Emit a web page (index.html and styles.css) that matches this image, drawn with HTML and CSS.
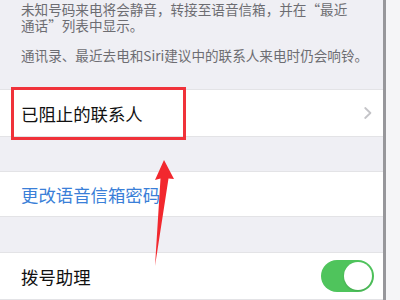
FILE: index.html
```html
<!DOCTYPE html>
<html lang="zh-CN">
<head>
<meta charset="utf-8">
<title>电话设置</title>
<link rel="stylesheet" href="styles.css">
</head>
<body>
<div class="screen">
  <main class="main">
    <div class="note">
      <p>未知号码来电将会静音，转接至语音信箱，并在“最近<br>通话”列表中显示。</p>
      <p>通讯录、最近去电和Siri建议中的联系人来电时仍会响铃。</p>
    </div>
    <div class="row row-first">
      <span class="label">已阻止的联系人</span>
      <svg class="chev" width="8" height="12" viewBox="0 0 8 12"><path d="M1.2 1 L6.4 6 L1.2 11" fill="none" stroke="#c4c4c8" stroke-width="1.8" stroke-linecap="round" stroke-linejoin="round"/></svg>
    </div>
    <div class="gap"></div>
    <div class="row row-second">
      <span class="label link">更改语音信箱密码</span>
    </div>
    <div class="gap gap2"></div>
    <div class="row row-third">
      <span class="label">拨号助理</span>
      <span class="toggle"><span class="knob"></span></span>
    </div>
  </main>
  <div class="edge"></div>
  <div class="aside"></div>

  <div class="highlight"></div>
  <svg class="arrow" width="400" height="300" viewBox="0 0 400 300">
    <polygon points="164,160 174,179 168.5,178.5 155,266 160.5,178.5 155,180" fill="#f2282e"/>
  </svg>
</div>
</body>
</html>
```
FILE: styles.css
```css
* { box-sizing: border-box; }
html, body {
  margin: 0;
  padding: 0;
  width: 400px;
  height: 300px;
  overflow: hidden;
  background: #efeff4;
  font-family: "Noto Sans CJK SC", "Liberation Sans", sans-serif;
}
.screen {
  position: relative;
  display: flex;
  width: 400px;
  height: 300px;
}
.main {
  flex: 0 0 383px;
  background: #efeff4;
}
.edge {
  flex: 0 0 3px;
  background: #97979b;
}
.aside {
  flex: 1;
  background: #f5f5f7;
}
.note {
  padding: 2px 12px 0 21px;
  height: 89px;
  color: #6d6d72;
  font-size: 13.6px;
  line-height: 15.5px;
}
.note p {
  margin: 0 0 15px 0;
}
.row {
  display: flex;
  align-items: center;
  justify-content: space-between;
  background: #fff;
  padding: 0 11px 0 21px;
  border-top: 1px solid #e3e3e6;
  border-bottom: 1px solid #e3e3e6;
}
.row-first { height: 48px; }
.row-second { height: 46px; }
.row-third { height: 48px; padding-right: 9px; }
.gap { height: 34px; }
.gap2 { height: 35px; }
.label {
  font-size: 17.4px;
  color: #111;
  letter-spacing: 0;
}
.label.link { color: #3a7fd8; }
.chev { display: block; }
.toggle {
  position: relative;
  width: 53px;
  height: 32px;
  border-radius: 16px;
  background: #4fc45c;
}
.knob {
  position: absolute;
  right: 2px;
  top: 2px;
  width: 28px;
  height: 28px;
  border-radius: 50%;
  background: #fff;
  box-shadow: 0 1px 2px rgba(0,0,0,0.15);
}
.highlight {
  position: absolute;
  left: 11px;
  top: 87px;
  width: 175px;
  height: 53px;
  border: 3px solid #f0323a;
}
.arrow {
  position: absolute;
  left: 0;
  top: 0;
  pointer-events: none;
}
```
